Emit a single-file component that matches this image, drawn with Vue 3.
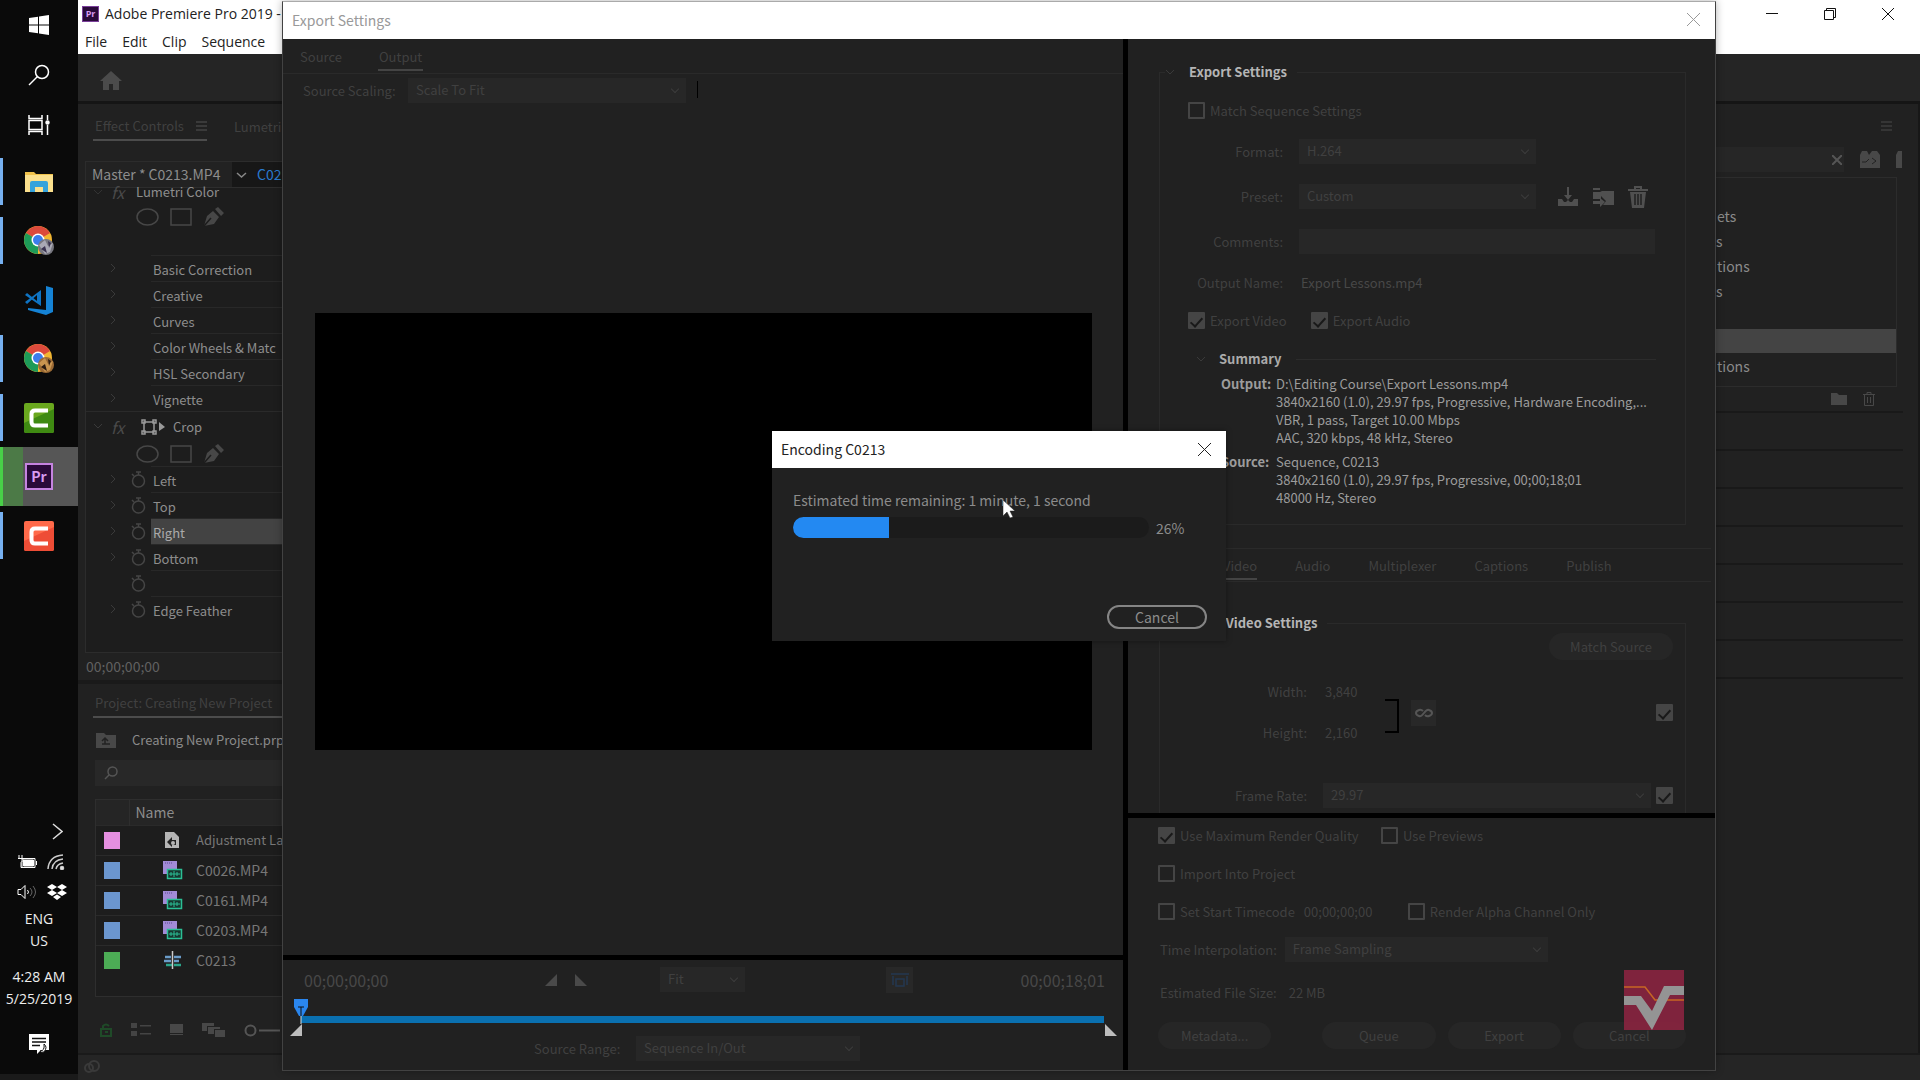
<template>
  <div class="desktop">
    <!-- Windows taskbar -->
    <nav class="taskbar" aria-label="Taskbar">
      <button class="task small" aria-label="Start">
        <svg width="20" height="20" viewBox="0 0 20 20" fill="#fff"><path d="M0 3l9-1.300v7.800H0zM10 1.500L20 0v9.500H10zM0 10.500h9v7.800L0 17zM10 10.500h10V20l-10-1.500z" /></svg>
      </button>
      <button class="task small" aria-label="Search">
        <svg width="22" height="22" viewBox="0 0 22 22" fill="none" stroke="#fff" stroke-width="1.500"><circle cx="14" cy="8" r="6.500" /><path d="M9.500 12.500L1 21" /></svg>
      </button>
      <button class="task small last" aria-label="Task view">
        <svg width="22" height="20" viewBox="0 0 22 20" fill="none" stroke="#fff" stroke-width="1.500"><path d="M1 0v3.500h13V0M1 20v-3.500h13V20M1 5.500h13v9H1zM19.500 0v5M19.500 10v10" /><circle cx="19.500" cy="7.500" r="1.500" fill="#fff" /></svg>
      </button>
      <button v-for="(t, i) in tasks" :key="i" class="task" :class="{ open: t.open, active: t.active }" :aria-label="t.name">
        <svg v-if="t.icon === 'folder'" width="30" height="26" viewBox="0 0 30 26">
          <path d="M1 3h9l2 2h17v18H1z" fill="#f0c24b" /><path d="M1 6h28v17H1z" fill="#fbe08d" />
          <path d="M6 23v-9q0-2 2-2h14q2 0 2 2v9h-5v-5h-8v5z" fill="#35a3dc" />
        </svg>
        <svg v-else-if="t.icon === 'chrome'" width="32" height="32" viewBox="0 0 32 32">
          <circle cx="15" cy="15" r="14" fill="#f2b632" />
          <path d="M15 15L2.900 8A14 14 0 0 1 27.100 8z" fill="#dc4a3c" />
          <path d="M15 15L2.900 8A14 14 0 0 0 15 29z" fill="#1d9b58" />
          <circle cx="15" cy="15" r="6.500" fill="#fff" /><circle cx="15" cy="15" r="5" fill="#3b7ded" />
          <circle cx="23" cy="22" r="8" :fill="t.a" /><path d="M16 20l6-5 3 6 5-3-3 9-5 2z" :fill="t.b" /><path d="M18 24l4-3 2 7zM25 16l3 2-2 5z" :fill="t.c" />
        </svg>
        <svg v-else-if="t.icon === 'code'" width="30" height="30" viewBox="0 0 30 30">
          <path d="M22 1l7 2v24l-7 3L4 25v-2l18 2z" fill="#1583d5" />
          <path d="M17 5v16L1 10l2-2 10 8v-6L3 19l-2-2z" fill="#0f74c4" />
        </svg>
        <svg v-else-if="t.icon === 'camtasia'" width="30" height="30" viewBox="0 0 30 30">
          <rect width="30" height="30" rx="2" :fill="t.a" /><path d="M0 20L30 6v22q0 2-2 2H2q-2 0-2-2z" :fill="t.b" />
          <path d="M24 7.500H11q-3.500 0-3.500 3.500v8q0 3.500 3.500 3.500h13" fill="none" stroke="#fff" stroke-width="4" />
        </svg>
        <span v-else class="pr big">Pr</span>
      </button>
      <div class="tray">
        <svg class="more" width="11" height="17" viewBox="0 0 11 17" fill="none" stroke="#ddd" stroke-width="1.500"><path d="M1 1l9 7.500L1 16" /></svg>
        <div class="tray-icons">
          <svg width="20" height="14" viewBox="0 0 20 14" fill="none" stroke="#fff"><path d="M5 3.500h13v9H5zM2 0v3M5 0v3M1 3.500h5v2l-2 2v5h2" /><path d="M6.500 5h10v6h-10z" fill="#fff" /><path d="M19.500 6v4" /></svg>
          <svg width="18" height="16" viewBox="0 0 18 16" fill="none" stroke="#ccc" stroke-width="1.500"><path d="M1 15Q2 2 16 1M5 15Q6 6 16 5M9 15Q10 10 16 9" /><circle cx="15" cy="14" r="1.500" fill="#fff" /></svg>
          <svg width="20" height="14" viewBox="0 0 20 14" fill="none" stroke="#fff"><path d="M1 4.500h3l4-4v13l-4-4H1zM10.500 5q2 2 0 4" /><path d="M13 3q4 4 0 8M16 1q5 6 0 12" stroke="#666" /></svg>
          <svg width="20" height="16" viewBox="0 0 20 16" fill="#fff"><path d="M5 0l5 3-5 3-5-3zM15 0l5 3-5 3-5-3zM5 6l5 3-5 3-5-3zM15 6l5 3-5 3-5-3zM10 10.500l4 2.500-4 3-4-3z" /></svg>
        </div>
        <div class="tray-text">ENG<br />US</div>
        <div class="tray-text clock">4:28 AM<br />5/25/2019</div>
        <svg class="notice" width="20" height="20" viewBox="0 0 20 20"><path d="M0 0h20v16h-8l-4 4v-4H0z" fill="#fff" /><path d="M3 4.500h14M3 8h14M3 11.500h8" stroke="#111" stroke-width="1.300" /><path d="M15 10q4 3 0 8-3 1-4-1 5 0 4-7z" fill="#fff" stroke="#111" /></svg>
      </div>
    </nav>

    <!-- Premiere main window -->
    <div class="premiere">
      <header class="win-head">
        <div class="win-title">
          <span class="pr">Pr</span>
          <span class="win-name">Adobe Premiere Pro 2019 -</span>
          <div class="win-buttons">
            <button aria-label="Minimize"><svg width="12" height="12" viewBox="0 0 12 12"><path d="M0 5.500h12" stroke="#111" /></svg></button>
            <button aria-label="Restore"><svg width="12" height="12" viewBox="0 0 12 12" fill="none" stroke="#111"><path d="M.5 2.500h9v9h-9zM2.500 2.500v-2h9v9h-2" /></svg></button>
            <button aria-label="Close"><svg width="12" height="12" viewBox="0 0 12 12" stroke="#111"><path d="M0 0l12 12M12 0L0 12" /></svg></button>
          </div>
        </div>
        <div class="menu"><button v-for="m in menus" :key="m">{{ m }}</button></div>
      </header>
      <div class="home">
        <svg width="22" height="20" viewBox="0 0 22 20" fill="#4b4b4b"><path d="M11 0l11 10h-3v9h-6v-6H9v6H3v-9H0z" /></svg>
      </div>

      <div class="work">
        <div class="col-left">
          <section class="effects">
            <div class="panel-tabs">
              <button class="current">Effect Controls <svg width="11" height="10" viewBox="0 0 11 10" stroke="#555"><path d="M0 1h11M0 5h11M0 9h11" /></svg></button>
              <button>Lumetri</button>
            </div>
            <div class="fx-box">
              <div class="master">
                <span class="clip">Master * C0213.MP4</span>
                <span class="seq"><svg width="11" height="6" viewBox="0 0 11 6" fill="none" stroke="#888" stroke-width="1.500"><path d="M1 1l4.500 4L10 1" /></svg> C02</span>
              </div>
              <div class="fx-name first">
                <svg width="9" height="5" viewBox="0 0 9 5" fill="none" stroke="#333"><path d="M0 0l4 4 4-4" /></svg><i>fx</i><span>Lumetri Color</span>
              </div>
              <div class="masks tall">
                <svg width="88" height="20" viewBox="0 0 88 20" fill="none" stroke="#474747" stroke-width="1.500"><ellipse cx="11.500" cy="10" rx="10.500" ry="8" /><path d="M35 2h20v16H35z" /><path d="M68 19l3-10 6-5 6 6-5 7zM79 2l3-2 6 6-3 3z" fill="#474747" stroke="none" /><path d="M68 19l7-8" stroke="#1d1d1d" /></svg>
              </div>
              <div v-for="p in lumetri" :key="p" class="param">
                <svg width="5" height="8" viewBox="0 0 5 8" fill="none" stroke="#3a3a3a"><path d="M0 0l4 4-4 4" /></svg><span class="nowatch"></span><span class="pname">{{ p }}</span>
              </div>
              <div class="fx-name">
                <svg width="9" height="5" viewBox="0 0 9 5" fill="none" stroke="#3a3a3a"><path d="M0 0l4 4 4-4" /></svg><i>fx</i>
                <svg class="crop" width="25" height="16" viewBox="0 0 25 16" fill="none" stroke="#999" stroke-width="1.500"><path d="M3 3h10v10H3zM1 1h3v3H1zM12 1h3v3h-3zM1 12h3v3H1zM12 12h3v3h-3z" /><path d="M18 3l6 5-6 4z" fill="#999" stroke="none" /></svg>
                <span>Crop</span>
              </div>
              <div class="masks">
                <svg width="88" height="20" viewBox="0 0 88 20" fill="none" stroke="#474747" stroke-width="1.500"><ellipse cx="11.500" cy="10" rx="10.500" ry="8" /><path d="M35 2h20v16H35z" /><path d="M68 19l3-10 6-5 6 6-5 7zM79 2l3-2 6 6-3 3z" fill="#474747" stroke="none" /><path d="M68 19l7-8" stroke="#1d1d1d" /></svg>
              </div>
              <div v-for="p in crop" :key="p" class="param" :class="{ chosen: p === 'Right' }">
                <svg width="5" height="8" viewBox="0 0 5 8" fill="none" stroke="#3a3a3a"><path v-if="p" d="M0 0l4 4-4 4" /></svg>
                <svg class="watch" width="15" height="17" viewBox="0 0 15 17" fill="none" stroke="#454545" stroke-width="1.500"><circle cx="7.500" cy="10" r="6" /><path d="M5 1h5M7.500 1v3M1 3l2 2" /></svg>
                <span class="pname">{{ p }}</span>
              </div>
            </div>
            <div class="fx-time">00;00;00;00</div>
          </section>

          <section class="project">
            <div class="panel-tabs"><button class="current wide">Project: Creating New Project</button></div>
            <div class="bin"><svg width="20" height="15" viewBox="0 0 20 15"><path d="M0 0h8l2 2h10v13H0z" fill="#484848" /><path d="M6 11h8M9 11V6M6 8l3-3 3 3" stroke="#222" fill="none" stroke-width="1.500" /></svg>Creating New Project.prp</div>
            <div class="bin-search">
              <svg width="14" height="14" viewBox="0 0 14 14" fill="none" stroke="#555" stroke-width="1.500"><circle cx="8.500" cy="5.500" r="4.500" /><path d="M5 9l-4 4" /></svg>
              <input type="text" aria-label="Search project" />
            </div>
            <div class="bin-box">
              <table>
                <colgroup><col class="w-label" /><col class="w-kind" /><col /></colgroup>
                <thead><tr><th></th><th colspan="2">Name</th></tr></thead>
                <tbody>
                  <tr v-for="c in clips" :key="c.name">
                    <td><span class="swatch" :class="c.color"></span></td>
                    <td class="kind">
                      <svg v-if="c.color === 'pink'" width="18" height="18" viewBox="0 0 18 18"><path d="M2 1h9l5 5v11H2z" fill="#b5b5b5" /><path d="M4 11l5-5v3h4v5H9v2z" fill="#222" /><circle cx="10" cy="12" r="2" fill="#b5b5b5" /></svg>
                      <svg v-else-if="c.color === 'blue'" width="20" height="20" viewBox="0 0 20 20"><path d="M0 1h14v13H0z" fill="#a28bd6" /><path d="M2 3h8" stroke="#5d4a91" stroke-dasharray="1 1" /><path d="M4.500 9.500h14v9h-14z" fill="#17372f" stroke="#2bbf95" stroke-width="1.500" /><path d="M6 14h11M8 12v4M11 11v6M14 12v4" stroke="#2bbf95" /></svg>
                      <svg v-else width="20" height="18" viewBox="0 0 20 18" fill="none"><path d="M2 6h6M11 6h7M1 10h7M11 10h5" stroke="#6a9cc9" stroke-width="2.500" /><path d="M3 14h6M11 14h7" stroke="#2ba58a" stroke-width="2.500" /><path d="M9.500 0v18" stroke="#ccc" stroke-width="1.500" /></svg>
                    </td>
                    <td>{{ c.name }}</td>
                  </tr>
                </tbody>
              </table>
            </div>
            <div class="bin-tools">
              <svg width="12" height="14" viewBox="0 0 12 14" fill="none" stroke="#1f4a28" stroke-width="2"><path d="M1 6h10v7H1zM3 6V3q3-3 6 0M5 9h3" /></svg>
              <svg width="20" height="14" viewBox="0 0 20 14" fill="#444"><path d="M0 0h6v5H0zM0 8h6v5H0zM9 2h11v1.500H9zM9 10h11v1.500H9z" /></svg>
              <svg width="13" height="12" viewBox="0 0 13 12" fill="#484848"><path d="M0 0h13v9H0zM0 10h13v1H0z" /></svg>
              <svg width="23" height="14" viewBox="0 0 23 14" fill="#484848"><path d="M0 0h12v3H5v5H0zM6 4h12v2h-6v5H6zM13 7h10v7H13z" /></svg>
              <svg width="36" height="13" viewBox="0 0 36 13" fill="none" stroke="#555" stroke-width="2"><circle cx="6.500" cy="6.500" r="5" /><path d="M15 6.500h21" /></svg>
            </div>
          </section>
        </div>

        <div class="col-right">
          <div class="right-head"><svg width="11" height="10" viewBox="0 0 11 10" stroke="#4a4a4a"><path d="M0 1h11M0 5h11M0 9h11" /></svg></div>
          <div class="right-search">
            <input type="text" aria-label="Search effects" />
            <svg class="clear" width="10" height="10" viewBox="0 0 10 10" stroke="#555" stroke-width="2"><path d="M0 0l10 10M10 0L0 10" /></svg>
            <svg width="20" height="17" viewBox="0 0 20 17" fill="#484848"><path d="M0 4l2-4h5l2 4 3-4h5l3 4v13H0z" /><path d="M2 11h4l3-3M12 7l4 3-4 3" stroke="#222" fill="none" /></svg>
            <svg class="cut" width="6" height="17" viewBox="0 0 6 17" fill="#484848"><path d="M0 4l2-4h4v17H0z" /></svg>
          </div>
          <div class="right-list">
            <p>ets</p><p class="tail">s</p><p>tions</p><p class="tail">s</p><p></p><p class="on"></p><p>tions</p>
          </div>
          <div class="right-tools">
            <svg width="16" height="12" viewBox="0 0 16 12" fill="#484848"><path d="M0 0h6l2 2h8v10H0z" /></svg>
            <svg width="12" height="14" viewBox="0 0 12 14" fill="none" stroke="#484848"><path d="M0 2.500h12M4 2V.5h4V2M1.500 3v10.500h9V3M4.500 5v6M7.500 5v6" /></svg>
          </div>
          <div v-for="n in 7" :key="n" class="strip"></div>
        </div>
      </div>
      <footer class="status">
        <svg width="16" height="13" viewBox="0 0 16 13" fill="none" stroke="#3a3a3a" stroke-width="2"><circle cx="5" cy="8" r="4" /><circle cx="10" cy="6" r="5" /></svg>
      </footer>
    </div>

    <!-- Export window -->
    <div class="export" role="dialog" aria-label="Export Settings">
      <div class="export-title">
        <span>Export Settings</span>
        <button aria-label="Close export"><svg width="13" height="13" viewBox="0 0 13 13" stroke="#999"><path d="M0 0l13 13M13 0L0 13" /></svg></button>
      </div>
      <div class="export-body">
        <div class="view">
          <div class="view-tabs"><button>Source</button><button class="current">Output</button></div>
          <div class="scaling">
            <label for="scaling">Source Scaling:</label>
            <div class="select"><select id="scaling"><option>Scale To Fit</option></select></div>
            <span class="caret"></span>
          </div>
          <div class="stage"><div class="frame"></div></div>
          <div class="transport">
            <div class="time-row">
              <span class="time">00;00;00;00</span>
              <div class="marks">
                <button aria-label="Set in point"><svg width="12" height="12" viewBox="0 0 12 12" fill="#4a4a4a"><path d="M12 0v12H0z" /></svg></button>
                <button aria-label="Set out point"><svg width="12" height="12" viewBox="0 0 12 12" fill="#4a4a4a"><path d="M0 0v12h12z" /></svg></button>
              </div>
              <div class="select fit"><select aria-label="Zoom level"><option>Fit</option></select></div>
              <button class="aspect" aria-label="Aspect ratio correction"><svg width="18" height="14" viewBox="0 0 18 14" fill="none" stroke="#233750" stroke-width="1.500"><path d="M0 1h18M2 3v9M16 3v9M5 6h8v7H5z" /></svg></button>
              <span class="time end">00;00;18;01</span>
            </div>
            <div class="timeline">
              <svg class="head" width="14" height="25" viewBox="0 0 14 25"><path d="M0 0h14v8l-5 9H5L0 8z" fill="#2a86ee" /><path d="M4 8h6M7 8v9" stroke="#111" /><path d="M7 17v8" stroke="#ddd" /></svg>
              <div class="track"></div>
              <div class="ends">
                <svg width="12" height="12" viewBox="0 0 12 12" fill="#bdbdbd"><path d="M12 0v12H0z" /></svg>
                <svg width="12" height="12" viewBox="0 0 12 12" fill="#bdbdbd"><path d="M0 0v12h12z" /></svg>
              </div>
            </div>
            <div class="range">
              <label for="range">Source Range:</label>
              <div class="select"><select id="range"><option>Sequence In/Out</option></select></div>
            </div>
          </div>
        </div>

        <div class="settings">
          <div class="settings-top">
            <fieldset class="group">
              <legend><svg width="9" height="5" viewBox="0 0 9 5" fill="none" stroke="#3a3a3a"><path d="M0 0l4 4 4-4" /></svg>Export Settings</legend>
              <div class="row check-row"><label><input type="checkbox" />Match Sequence Settings</label></div>
              <div class="row">
                <label class="tag" for="format">Format:</label>
                <div class="select std"><select id="format"><option>H.264</option></select></div>
              </div>
              <div class="row lower">
                <label class="tag" for="preset">Preset:</label>
                <div class="select std"><select id="preset"><option>Custom</option></select></div>
                <div class="preset-icons">
                  <button aria-label="Save preset"><svg width="20" height="20" viewBox="0 0 20 20" fill="#505050"><path d="M9 0h2v8h3l-4 5-4-5h3zM0 12h4l2 3h2l2-2 2 2h2l2-3h4v7H0z" /></svg></button>
                  <button aria-label="Import preset"><svg width="22" height="20" viewBox="0 0 22 20" fill="#505050"><path d="M1 1h7v2H1zM1 5h7l2-1h12v14H11l3-4-5-5v3H1z" /><path d="M1 14h7v-3l5 4-5 5v-3H1z" /></svg></button>
                  <button aria-label="Delete preset"><svg width="20" height="22" viewBox="0 0 20 22" fill="#505050"><path d="M0 3h6V0h8v3h6v2H0zM8 2v1h4V2zM2 6h16l-2 16H4z" /><path d="M7 8v11M10 8v11M13 8v11" stroke="#212121" stroke-width="1.500" /></svg></button>
                </div>
              </div>
              <div class="row lower">
                <label class="tag" for="comments">Comments:</label>
                <input id="comments" class="comments" type="text" />
              </div>
              <div class="row"><span class="tag">Output Name:</span><a href="#" class="file">Export Lessons.mp4</a></div>
              <div class="row check-row av">
                <label><input type="checkbox" checked />Export Video</label>
                <label><input type="checkbox" checked />Export Audio</label>
              </div>
              <div class="summary-head"><svg width="9" height="5" viewBox="0 0 9 5" fill="none" stroke="#3a3a3a"><path d="M0 0l4 4 4-4" /></svg><b>Summary</b><span></span></div>
              <dl class="summary">
                <dt>Output:</dt>
                <dd>D:\Editing Course\Export Lessons.mp4<br />3840x2160 (1.0), 29.97 fps, Progressive, Hardware Encoding,...<br />VBR, 1 pass, Target 10.00 Mbps<br />AAC, 320 kbps, 48 kHz, Stereo</dd>
                <dt>Source:</dt>
                <dd>Sequence, C0213<br />3840x2160 (1.0), 29.97 fps, Progressive, 00;00;18;01<br />48000 Hz, Stereo</dd>
              </dl>
            </fieldset>
            <div class="codec-tabs">
              <button v-for="t in codecTabs" :key="t" :class="{ current: t === 'Video' }">{{ t }}</button>
            </div>
            <fieldset class="group video">
              <legend><svg width="9" height="5" viewBox="0 0 9 5" fill="none" stroke="#3a3a3a"><path d="M0 0l4 4 4-4" /></svg>Basic Video Settings</legend>
              <button class="pill match">Match Source</button>
              <div class="dims">
                <div class="dim-rows">
                  <div class="dim"><span class="tag">Width:</span><span>3,840</span></div>
                  <div class="dim"><span class="tag">Height:</span><span>2,160</span></div>
                </div>
                <span class="bracket"></span>
                <button class="link" aria-label="Link dimensions"><svg width="18" height="10" viewBox="0 0 18 10" fill="none" stroke="#555" stroke-width="2"><path d="M8 3Q6 1 4 2 1 3 1 5t3 3q2 1 5-3t5-3q3 1 3 3t-3 3q-2 1-4-1" /></svg></button>
                <input type="checkbox" checked aria-label="Match frame size" />
              </div>
              <div class="rate">
                <label class="tag" for="rate">Frame Rate:</label>
                <div class="select"><select id="rate"><option>29.97</option></select></div>
                <input type="checkbox" checked aria-label="Match frame rate" />
              </div>
            </fieldset>
          </div>

          <div class="settings-bottom">
            <div class="opt"><label class="c1"><input type="checkbox" checked />Use Maximum Render Quality</label><label><input type="checkbox" />Use Previews</label></div>
            <div class="opt"><label><input type="checkbox" />Import Into Project</label></div>
            <div class="opt"><label><input type="checkbox" />Set Start Timecode</label><span class="start">00;00;00;00</span><label><input type="checkbox" />Render Alpha Channel Only</label></div>
            <div class="opt"><label for="interp">Time Interpolation:</label><div class="select interp"><select id="interp"><option>Frame Sampling</option></select></div></div>
            <div class="opt size"><span>Estimated File Size:</span><span>22 MB</span></div>
            <div class="actions">
              <button class="pill">Metadata...</button>
              <span></span>
              <button class="pill">Queue</button>
              <button class="pill">Export</button>
              <button class="pill">Cancel</button>
            </div>
            <svg class="brand" width="60" height="60" viewBox="0 0 60 60"><path d="M0 0h60v60H0z" fill="#85243f" /><path d="M0 17h21l10 13h29" fill="none" stroke="#cf6a25" stroke-width="1.500" /><path d="M0 26h17l11 15 12-25h20v9H46L28 60 12 35H0z" fill="#9b9b9b" /></svg>
          </div>
        </div>
      </div>

      <!-- Encoding progress -->
      <div class="encoding" role="dialog" aria-label="Encoding">
        <div class="encoding-title">
          <span>Encoding C0213</span>
          <button aria-label="Close encoding"><svg width="13" height="13" viewBox="0 0 13 13" stroke="#222"><path d="M0 0l13 13M13 0L0 13" /></svg></button>
        </div>
        <div class="encoding-body">
          <div>Estimated time remaining: 1 minute, 1 second</div>
          <div class="progress">
            <div class="bar"><div class="fill" :style="{ width: barWidth + '%' }"></div></div>
            <span>{{ percent }}%</span>
          </div>
          <button class="stop">Cancel</button>
        </div>
        <svg class="pointer" width="12" height="19" viewBox="0 0 12 19"><path d="M0 0v16l4-4 3 6 3-1-3-6h5z" fill="#fff" stroke="#222" stroke-width=".5" /></svg>
      </div>
    </div>
  </div>
</template>

<script setup>
import { ref, computed } from 'vue'

const tasks = [
  { name: 'File Explorer', icon: 'folder', open: true },
  { name: 'Chrome', icon: 'chrome', open: true, a: '#77777f', b: '#a9a9b5', c: '#3a3350' },
  { name: 'Visual Studio Code', icon: 'code' },
  { name: 'Chrome profile 2', icon: 'chrome', open: true, a: '#9b6a35', b: '#c99550', c: '#2c1c12' },
  { name: 'Camtasia', icon: 'camtasia', open: true, a: '#6aa81e', b: '#3f8a12' },
  { name: 'Premiere Pro', icon: 'pr', active: true },
  { name: 'Camtasia Recorder', icon: 'camtasia', open: true, a: '#ff6a4a', b: '#ee4d36' }
]

const menus = ['File', 'Edit', 'Clip', 'Sequence']
const lumetri = ['Basic Correction', 'Creative', 'Curves', 'Color Wheels & Matc', 'HSL Secondary', 'Vignette']
const crop = ['Left', 'Top', 'Right', 'Bottom', '', 'Edge Feather']
const codecTabs = ['Video', 'Audio', 'Multiplexer', 'Captions', 'Publish']

const clips = [
  { name: 'Adjustment La', color: 'pink' },
  { name: 'C0026.MP4', color: 'blue' },
  { name: 'C0161.MP4', color: 'blue' },
  { name: 'C0203.MP4', color: 'blue' },
  { name: 'C0213', color: 'green' }
]

const percent = ref(26)
// the bar runs one step ahead of the label
const barWidth = computed(() => percent.value + 1)
</script>

<style>
body {
  margin: 0;
  background: #212121;
}
</style>

<style scoped>
* {
  box-sizing: border-box;
}

.desktop {
  position: relative;
  display: flex;
  min-height: 100vh;
  overflow: hidden;
  background: #212121;
  color: #404040;
  font-family: "Noto Sans CJK SC", "Noto Sans", sans-serif;
  font-size: 13px;
  line-height: 18px;
}

button,
input,
select {
  font: inherit;
  color: inherit;
  background: none;
  border: 0;
  border-radius: 0;
  padding: 0;
  margin: 0;
}

svg {
  display: block;
  flex: none;
}

p, dl, dd {
  margin: 0;
}

/* Taskbar */
.taskbar {
  display: flex;
  flex-direction: column;
  flex: none;
  width: 78px;
  background: #0a0a0a;
  border-bottom: 6px solid #1a1a1a;
}

.task {
  display: flex;
  align-items: center;
  justify-content: center;
  height: 59px;
  border-left: 3px solid transparent;
  border-right: 3px solid transparent;
}

.task.small {
  height: 50px;
}

.task.last {
  margin-bottom: 2px;
}

.task.open {
  height: 47px;
  margin: 6px 0;
  border-left-color: #76b0f0;
}

.task.active {
  border-left-color: #48d048;
  border-right-color: #565656;
  background: linear-gradient(to right, #4c7a47 20px, #565656 20px);
}

.pr {
  display: flex;
  align-items: center;
  justify-content: center;
  width: 17px;
  height: 16px;
  background: #2a0a3a;
  border: 1px solid #7a3f9a;
  color: #d79bf0;
  font-size: 9px;
  font-weight: bold;
}

.pr.big {
  width: 28px;
  height: 27px;
  padding-bottom: 2px;
  border: 2px solid #c583e0;
  font-size: 14px;
}

.tray {
  display: flex;
  flex-direction: column;
  margin-top: auto;
  padding-bottom: 20px;
  color: #eee;
  font-family: "Open Sans", sans-serif;
  font-size: 14px;
  text-align: center;
}

.more {
  margin: 0 0 14px 52px;
}

.tray-icons {
  display: grid;
  grid-template-columns: 20px 20px;
  gap: 14px 10px;
  margin: 0 0 8px 17px;
  align-items: center;
}

.tray-text {
  line-height: 22px;
}

.clock {
  margin: 14px 0 24px;
}

.notice {
  margin: 0 auto;
}

/* Main window */
.premiere {
  display: flex;
  flex-direction: column;
  flex: 1;
  min-width: 0;
}

.win-head {
  height: 54px;
  background: #fff;
  color: #222;
  font-family: "Open Sans", sans-serif;
  font-size: 14px;
}

.win-title {
  display: flex;
  align-items: center;
  height: 28px;
  padding-left: 4px;
}

.win-name {
  margin-left: 6px;
  white-space: nowrap;
}

.win-buttons {
  display: flex;
  gap: 46px;
  margin-left: auto;
  padding-right: 26px;
}

.menu {
  display: flex;
  align-items: center;
  gap: 15px;
  height: 27px;
  padding-left: 7px;
}

.home {
  height: 50px;
  padding: 17px 22px;
  background: #252525;
  border-bottom: 3px solid #151515;
}

.work {
  display: flex;
  justify-content: space-between;
  flex: 1;
  min-height: 0;
}

.col-left,
.col-right {
  display: flex;
  flex-direction: column;
  width: 204px;
  overflow: hidden;
  white-space: nowrap;
}

.effects {
  padding-left: 7px;
  border-bottom: 4px solid #1a1a1a;
}

.panel-tabs {
  display: flex;
  gap: 25px;
  padding: 11px 0 0 8px;
}

.panel-tabs button {
  display: flex;
  align-items: center;
  gap: 12px;
  height: 26px;
  padding: 0 0 3px 2px;
  white-space: nowrap;
}

.panel-tabs .current {
  border-bottom: 2px solid #4c4c4c;
}

.panel-tabs .wide {
  flex: 1;
}

.fx-box {
  margin-top: 20px;
  height: 492px;
  border: 1px solid #2c2c2c;
  border-right: 0;
  background: #1d1d1d;
  color: #8d8d8d;
}

.master {
  display: flex;
  height: 26px;
  background: #222;
  border-bottom: 1px solid #2d2d2d;
  font-size: 14px;
  line-height: 25px;
}

.clip {
  flex: none;
  width: 146px;
  padding-left: 6px;
}

.seq {
  display: flex;
  align-items: center;
  gap: 10px;
  flex: 1;
  padding-left: 4px;
  background: #171717;
  color: #2a7ad0;
}

.fx-name {
  display: flex;
  align-items: center;
  height: 30px;
  padding-left: 8px;
  border-top: 1px solid #2a2a2a;
}

.fx-name.first {
  height: 8px;
  border: 0;
  line-height: 8px;
}

.fx-name i {
  width: 25px;
  margin-left: 8px;
  color: #4a4a4a;
  font-size: 16px;
}

.crop {
  margin: 0 7px 0 5px;
}

.masks {
  padding: 3px 0 2px 50px;
}

.masks.tall {
  padding: 11px 0 28px 50px;
}

.param {
  display: flex;
  align-items: center;
  height: 26px;
  padding-left: 25px;
}

.nowatch,
.watch {
  flex: none;
  width: 15px;
  margin: 0 5px 0 15px;
}

.pname {
  flex: 1;
  height: 26px;
  padding-left: 2px;
  border-top: 1px solid #282828;
  line-height: 28px;
}

.chosen .pname {
  background: #434343;
  color: #aaa;
}

.fx-time {
  padding: 4px 0 5px 1px;
  color: #606060;
  font-size: 14px;
}

.project {
  display: flex;
  flex-direction: column;
  flex: 1;
  padding-left: 7px;
}

.project .panel-tabs {
  padding-top: 8px;
}

.bin {
  display: flex;
  align-items: center;
  gap: 16px;
  margin: 13px 0 11px;
  padding-left: 11px;
  color: #8a8a8a;
}

.bin-search {
  display: flex;
  align-items: center;
  height: 26px;
  margin-left: 10px;
  padding-left: 9px;
  background: #282828;
}

.bin-box {
  height: 198px;
  margin: 13px 0 0 10px;
  border: 1px solid #2e2e2e;
  border-right: 0;
  background: #1d1d1d;
  overflow: hidden;
}

table {
  width: 100%;
  table-layout: fixed;
  border-collapse: collapse;
  color: #777;
  font-size: 14px;
}

.w-label {
  width: 33px;
}

.w-kind {
  width: 67px;
}

th {
  height: 25px;
  padding: 0 6px;
  background: #252525;
  border-right: 1px solid #2e2e2e;
  color: #8d8d8d;
  font-weight: normal;
  text-align: left;
}

td {
  height: 30px;
  padding: 0;
  border-top: 1px solid #2a2a2a;
}

td.kind {
  padding-left: 34px;
}

tr:first-child td:last-child {
  font-size: 13px;
}

.swatch {
  display: block;
  width: 16px;
  height: 17px;
  margin-left: 8px;
}

.pink {
  background: #e58fe0;
}

.blue {
  background: #6b96cf;
}

.green {
  background: #4cac55;
}

.bin-tools {
  display: flex;
  align-items: center;
  gap: 19px;
  margin-top: 26px;
  padding-left: 15px;
}

.col-right {
  padding-right: 15px;
  border-right: 2px solid #171717;
  color: #8a8a8a;
  font-size: 14px;
}

.right-head {
  display: flex;
  justify-content: flex-end;
  padding: 17px 11px 16px 0;
}

.right-search {
  display: flex;
  align-items: center;
  height: 25px;
  margin-bottom: 5px;
}

.right-search input {
  width: 128px;
  height: 25px;
  background: #262626;
}

.clear {
  margin: 0 18px 0 -12px;
}

.cut {
  margin-left: 16px;
}

.right-list {
  display: flex;
  flex-direction: column;
  gap: 1px;
  margin-right: 6px;
  padding-top: 26px;
  height: 210px;
  border: solid #2c2c2c;
  border-width: 1px 1px 1px 0;
}

.right-list p {
  height: 24px;
  padding-left: 1px;
  line-height: 24px;
}

.right-list .tail {
  padding-left: 0;
}

.right-list .on {
  background: #444;
}

.right-tools {
  display: flex;
  align-items: center;
  gap: 16px;
  justify-content: flex-end;
  height: 26px;
  padding-right: 28px;
  border-bottom: 2px solid #191919;
}

.strip {
  height: 38px;
  border-bottom: 2px solid #191919;
}

.status {
  height: 27px;
  padding: 5px 6px;
  background: #252525;
  border-top: 2px solid #1a1a1a;
}

/* Export window floats over the workspace */
.export {
  position: absolute;
  top: 1px;
  right: 204px;
  bottom: 9px;
  left: 282px;
  display: flex;
  flex-direction: column;
  background: #212121;
  border: 1px solid #424242;
  border-top-color: #aaa;
  box-shadow: 0 0 8px rgba(0, 0, 0, 0.3);
}

.export-title {
  display: flex;
  align-items: center;
  justify-content: space-between;
  height: 37px;
  padding: 0 15px 2px 9px;
  background: #fff;
  color: #999;
  font-size: 14px;
}

.export-body {
  display: flex;
  flex: 1;
  min-height: 0;
}

.view {
  display: flex;
  flex-direction: column;
  flex: 1;
  min-width: 0;
  border-right: 5px solid #000;
}

.view-tabs {
  display: flex;
  gap: 35px;
  height: 35px;
  padding: 6px 0 0 16px;
  border-bottom: 1px solid #2a2a2a;
}

.view-tabs button {
  height: 26px;
  padding: 0 1px 1px;
  border-bottom: 2px solid transparent;
}

.view-tabs .current,
.codec-tabs .current {
  border-bottom-color: #444;
}

.scaling {
  display: flex;
  align-items: center;
  height: 33px;
  padding-left: 20px;
}

.scaling label {
  width: 105px;
}

.scaling .select {
  width: 278px;
}

.caret {
  width: 1px;
  height: 17px;
  margin: 0 0 3px 11px;
  background: #000;
}

.select {
  position: relative;
  display: flex;
}

.select select {
  width: 100%;
  height: 25px;
  padding: 0 8px 1px;
  appearance: none;
  background: #272727;
}

.select::after {
  content: "";
  position: absolute;
  top: 8px;
  right: 8px;
  width: 5px;
  height: 5px;
  border: solid #3c3c3c;
  border-width: 0 1px 1px 0;
  transform: rotate(45deg);
}

.stage {
  display: flex;
  align-items: center;
  flex: 1;
  padding: 1px 31px 0 32px;
}

.frame {
  width: 100%;
  aspect-ratio: 16 / 9;
  background: #000;
}

.transport {
  height: 115px;
  border-top: 5px solid #000;
}

.time-row {
  display: flex;
  align-items: center;
  height: 39px;
  padding: 0 18px 0 21px;
}

.time {
  width: 241px;
  color: #484848;
  font-size: 16px;
}

.marks {
  display: flex;
  gap: 18px;
}

.fit {
  width: 85px;
  margin-left: 73px;
}

.aspect {
  display: flex;
  align-items: center;
  justify-content: center;
  width: 27px;
  height: 26px;
  margin-left: 141px;
  background: #282828;
}

.end {
  flex: 1;
  text-align: right;
}

.timeline {
  position: relative;
  padding: 17px 6px 0 7px;
}

.head {
  position: absolute;
  top: 0;
  left: 11px;
}

.track {
  height: 7px;
  margin: 0 13px 0 11px;
  background: #0a70b0;
}

.ends {
  display: flex;
  justify-content: space-between;
  padding-top: 1px;
}

.range {
  display: flex;
  align-items: center;
  padding-left: 251px;
}

.range label {
  width: 102px;
}

.range .select {
  width: 224px;
}

/* Right side of the export window */
.settings {
  display: flex;
  flex-direction: column;
  width: 587px;
}

.settings-top {
  display: flex;
  flex-direction: column;
  flex: 1;
  min-height: 0;
  padding-top: 23px;
  overflow: hidden;
}

.group {
  min-width: 0;
  margin: 0 29px 0 31px;
  padding: 0 0 17px;
  border: 1px solid #2a2a2a;
}

legend {
  display: flex;
  align-items: center;
  gap: 14px;
  height: 20px;
  margin-left: 5px;
  padding: 0 10px 0 1px;
  color: #b5b5b5;
  font-weight: bold;
  line-height: 20px;
}

.row {
  display: flex;
  align-items: center;
  height: 25px;
  margin-top: 16px;
}

.row.lower {
  margin-top: 20px;
}

.check-row {
  gap: 24px;
  padding-left: 28px;
}

label {
  display: flex;
  align-items: center;
}

.tag {
  flex: none;
  display: block;
  width: 123px;
  margin-right: 16px;
  text-align: right;
}

input[type="checkbox"] {
  flex: none;
  display: grid;
  place-items: center;
  width: 17px;
  height: 17px;
  margin-right: 5px;
  appearance: none;
  border: 2px solid #454545;
  border-radius: 1px;
}

input[type="checkbox"]:checked {
  background: #454545;
}

input[type="checkbox"]:checked::before {
  content: "";
  width: 5px;
  height: 10px;
  border: solid #191919;
  border-width: 0 2px 2px 0;
  transform: rotate(42deg);
}

.std {
  width: 237px;
}

.preset-icons {
  display: flex;
  align-items: center;
  gap: 14px;
  margin-left: 22px;
}

.comments {
  width: 356px;
  height: 25px;
  background: #272727;
}

.file {
  padding-left: 2px;
  color: #484848;
  text-decoration: none;
}

.av {
  margin-top: 13px;
}

.summary-head {
  display: flex;
  align-items: center;
  height: 20px;
  margin-top: 16px;
  padding: 0 29px 0 37px;
  color: #aaa;
}

.summary-head b {
  width: 77px;
  margin-left: 13px;
}

.summary-head span {
  flex: 1;
  height: 1px;
  background: #2c2c2c;
}

.summary {
  display: grid;
  grid-template-columns: 55px 1fr;
  gap: 6px 0;
  margin-top: 6px;
  padding-left: 61px;
  color: #9c9c9c;
  white-space: nowrap;
}

dt {
  font-weight: bold;
}

.codec-tabs {
  display: flex;
  gap: 38px;
  height: 34px;
  margin: 23px 4px 0 0;
  padding-left: 95px;
  border: solid #2a2a2a;
  border-width: 1px 0;
}

.codec-tabs button {
  height: 31px;
  padding: 4px 0 0;
  border-bottom: 2px solid transparent;
}

.video {
  flex: 1;
  margin-top: 31px;
  padding: 0 12px 0 0;
  border-bottom: 0;
}

.pill {
  height: 27px;
  border-radius: 14px;
  background: #262626;
}

.match {
  display: block;
  width: 124px;
  margin-left: auto;
}

.dims {
  display: flex;
  align-items: center;
  margin-top: 19px;
}

.dim-rows {
  display: flex;
  flex-direction: column;
  gap: 16px;
  width: 225px;
  padding-bottom: 1px;
}

.dim {
  display: flex;
  align-items: center;
  height: 25px;
}

.video .tag {
  width: 147px;
}

.dim .tag {
  margin-right: 18px;
}

.bracket {
  width: 14px;
  height: 34px;
  margin-top: 7px;
  border: 2px solid #000;
  border-left: 0;
}

.link {
  display: flex;
  align-items: center;
  justify-content: center;
  width: 25px;
  height: 26px;
  margin-left: 12px;
  background: #282828;
}

.dims input[type="checkbox"] {
  margin: 0 0 0 auto;
}

.rate {
  display: flex;
  align-items: center;
  margin-top: 37px;
}

.rate .select {
  flex: 1;
}

.rate input[type="checkbox"] {
  margin: 0 0 0 5px;
}

.settings-bottom {
  position: relative;
  display: flex;
  flex-direction: column;
  height: 257px;
  padding: 5px 29px 0 30px;
  border-top: 5px solid #000;
}

.opt {
  display: flex;
  align-items: center;
  height: 25px;
  margin-bottom: 13px;
}

.c1 {
  width: 223px;
}

.start {
  width: 104px;
  margin-left: 9px;
}

.interp {
  width: 263px;
  margin-left: 8px;
}

.size {
  gap: 12px;
  margin: 5px 0 17px;
}

.opt label[for],
.size {
  padding-left: 2px;
}

.actions {
  display: grid;
  grid-template-columns: 1fr 27px 1fr 1fr 1fr;
  gap: 12px;
}

.brand {
  position: absolute;
  top: 152px;
  right: 31px;
  opacity: 0.95;
}

/* Encoding window, centred on the export window */
.encoding {
  position: absolute;
  top: 50%;
  left: 50%;
  width: 454px;
  transform: translate(-50%, -50%);
  background: #212121;
  box-shadow: 0 0 6px rgba(0, 0, 0, 0.4);
  color: #8c8c8c;
  font-size: 14px;
}

.encoding-title {
  display: flex;
  align-items: center;
  justify-content: space-between;
  height: 37px;
  padding: 0 15px 1px 9px;
  background: #fff;
  color: #222;
}

.encoding-body {
  display: flex;
  flex-direction: column;
  padding: 23px 19px 12px 21px;
}

.progress {
  display: flex;
  align-items: center;
  gap: 7px;
  margin: 8px 0 67px;
}

.bar {
  width: 356px;
  height: 21px;
  overflow: hidden;
  border-radius: 11px;
  background: #1b1b1b;
}

.fill {
  height: 100%;
  background: #2389f2;
}

.stop {
  align-self: flex-end;
  width: 100px;
  height: 24px;
  border: 2px solid #858585;
  border-radius: 12px;
  line-height: 20px;
}

.pointer {
  position: absolute;
  top: 69px;
  left: 231px;
}
</style>
